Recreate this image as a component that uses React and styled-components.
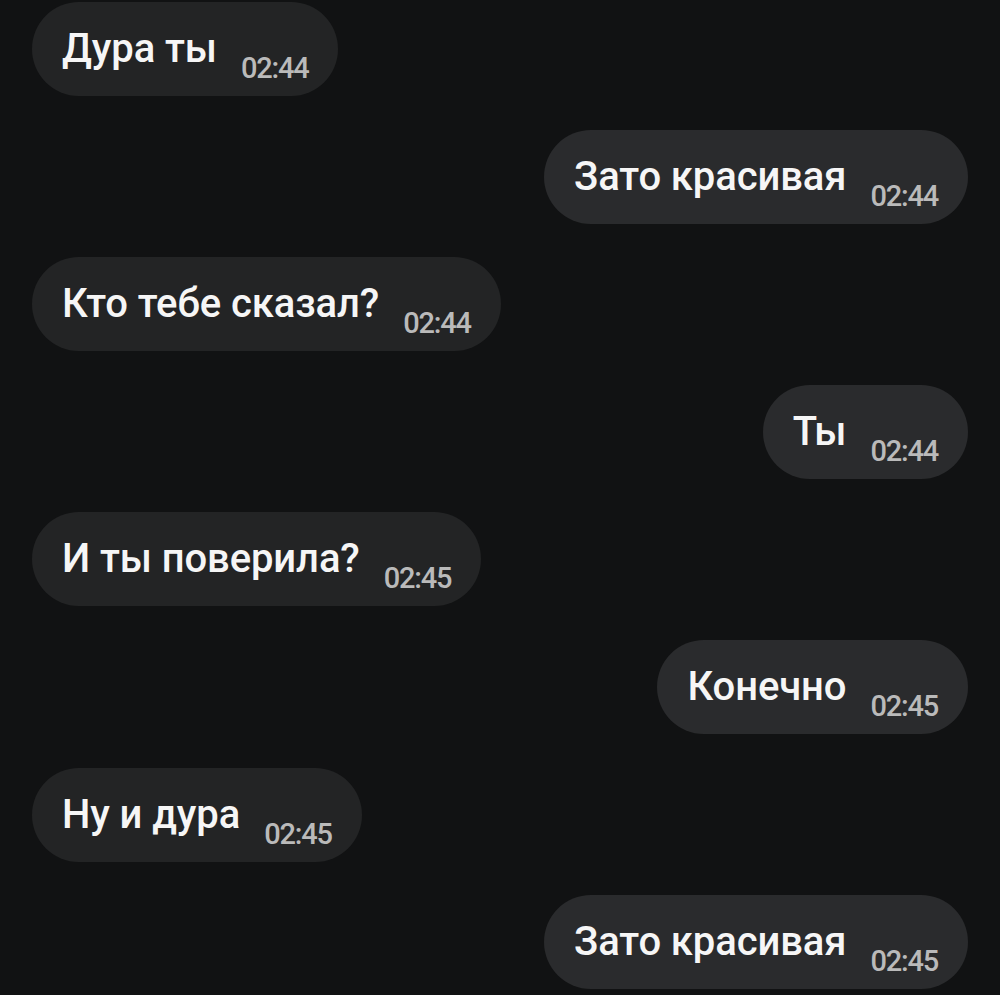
import styled, { createGlobalStyle } from "styled-components";

const messages = [
    { text: "Дура ты", time: "02:44", mine: false },
    { text: "Зато красивая", time: "02:44", mine: true },
    { text: "Кто тебе сказал?", time: "02:44", mine: false },
    { text: "Ты", time: "02:44", mine: true },
    { text: "И ты поверила?", time: "02:45", mine: false },
    { text: "Конечно", time: "02:45", mine: true },
    { text: "Ну и дура", time: "02:45", mine: false },
    { text: "Зато красивая", time: "02:45", mine: true },
];

function App() {
    return (
        <>
            <GlobalStyle />
            <Chat>
                {messages.map((m, i) => (
                    <Bubble key={i} $mine={m.mine}>
                        <Text>{m.text}</Text>
                        <Time>{m.time}</Time>
                    </Bubble>
                ))}
            </Chat>
        </>
    )
}

const GlobalStyle = createGlobalStyle`
    html, body {
        margin: 0;
        padding: 0;
        background-color: #111213;
    }
`

const Chat = styled.div`
    width: 1000px;
    height: 995px;
    box-sizing: border-box;
    padding: 2px 32px 0 32px;
    display: flex;
    flex-direction: column;
    gap: 33.6px;
    background-color: #111213;
    font-family: Roboto, "Liberation Sans", sans-serif;
    overflow: hidden;
`

const Bubble = styled.div`
    align-self: ${props => props.$mine ? 'flex-end' : 'flex-start'};
    height: 94px;
    flex-shrink: 0;
    box-sizing: border-box;
    padding: 0 30px;
    border-radius: 47px;
    display: flex;
    align-items: center;
    gap: 24px;
    background-color: ${props => props.$mine ? '#2a2b2d' : '#232425'};
`

const Text = styled.span`
    font-size: 40px;
    font-weight: 500;
    line-height: 1;
    color: #f6f6f6;
    letter-spacing: -0.1px;
`

const Time = styled.span`
    align-self: flex-end;
    margin-bottom: 13px;
    font-size: 29px;
    font-weight: 500;
    line-height: 1;
    color: #bababa;
    letter-spacing: -1.2px;
`

export default App
